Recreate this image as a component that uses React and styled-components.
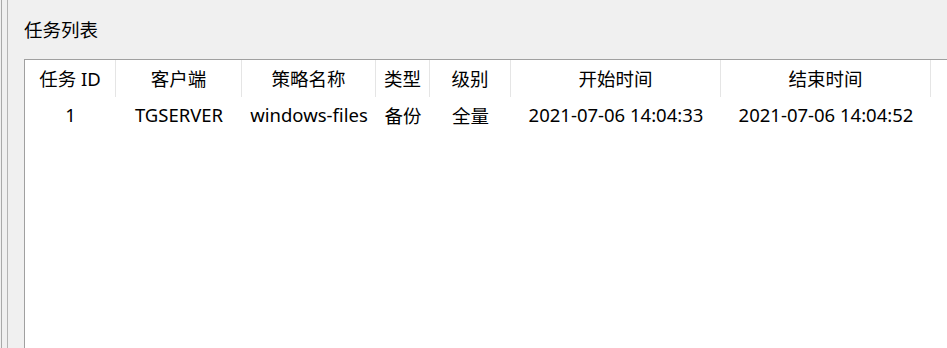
import React from "react";
import styled, { createGlobalStyle } from "styled-components";

const Global = createGlobalStyle`
  html, body { margin: 0; padding: 0; background: #f0f0f0; }
  body { width: 947px; height: 348px; overflow: hidden; }
  #root { height: 348px; }
`;

const Frame = styled.div`
  height: 348px;
  margin-left: 1px;
  border-left: 1px solid #a9a9a9;
  padding-left: 5px;
  box-sizing: border-box;
  display: flex;
`;

const Panel = styled.div`
  flex: 1;
  height: 100%;
  border-left: 1px solid #b4b4b4;
  padding-left: 16px;
  display: flex;
  flex-direction: column;
  min-width: 0;
  font-family: "Noto Sans", "Noto Sans CJK SC", sans-serif;
  font-size: 18.5px;
  color: #000;
`;

const Title = styled.div`
  height: 59px;
  line-height: 59px;
  flex: none;
`;

const ListBox = styled.div`
  flex: 1;
  background: #fff;
  border-top: 1px solid #a0a0a0;
  border-left: 1px solid #a0a0a0;
  overflow: hidden;
`;

const Grid = styled.div`
  display: grid;
  grid-template-columns: 91px 126px 134px 54px 81px 210px 210px;
`;

const HeadCell = styled.div`
  height: 37px;
  box-sizing: border-box;
  padding-bottom: 2px;
  border-right: 1px solid #e5e5e5;
  display: flex;
  align-items: center;
  justify-content: center;
  white-space: nowrap;
`;

const Cell = styled.div`
  height: 36px;
  padding-bottom: 1px;
  box-sizing: border-box;
  display: flex;
  align-items: center;
  justify-content: center;
  white-space: nowrap;
`;

const columns = ["任务 ID", "客户端", "策略名称", "类型", "级别", "开始时间", "结束时间"];
const rows = [
  ["1", "TGSERVER", "windows-files", "备份", "全量", "2021-07-06 14:04:33", "2021-07-06 14:04:52"],
];

export default function App() {
  return (
    <>
      <Global />
      <Frame>
        <Panel>
          <Title>任务列表</Title>
          <ListBox>
            <Grid>
              {columns.map((c) => (
                <HeadCell key={c}>{c}</HeadCell>
              ))}
              {rows.map((r, i) =>
                r.map((v, j) => <Cell key={i + "-" + j}>{v}</Cell>)
              )}
            </Grid>
          </ListBox>
        </Panel>
      </Frame>
    </>
  );
}
